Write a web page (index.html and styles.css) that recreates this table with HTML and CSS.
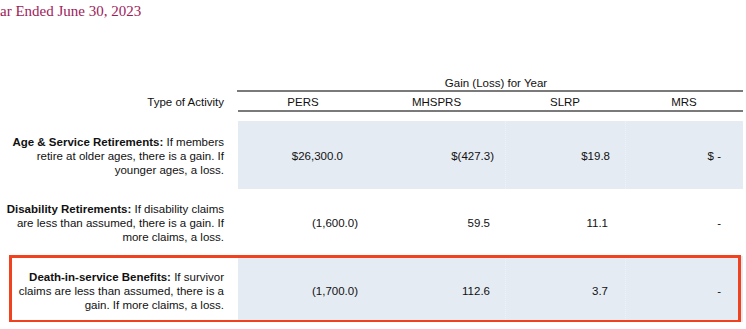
FILE: index.html
```html
<!DOCTYPE html>
<html lang="en">
<head>
    <meta charset="UTF-8">
    <title>Actuarial Gain (Loss) by Type of Activity</title>
    <link rel="stylesheet" href="styles.css">
</head>
<body>
    <h2 class="title">ar Ended June 30, 2023</h2>

    <div class="table">
        <div class="group-head">
            <div class="group-label">Gain (Loss) for Year</div>
        </div>
        <div class="head-row">
            <div class="label">Type of Activity</div>
            <div class="col">PERS</div>
            <div class="col">MHSPRS</div>
            <div class="col">SLRP</div>
            <div class="col">MRS</div>
        </div>

        <div class="row row-1 shaded">
            <div class="label"><b>Age &amp; Service Retirements:</b> If members<br>retire at older ages, there is a gain. If<br>younger ages, a loss.</div>
            <div class="val pers first">$26,300.0</div>
            <div class="val mhsprs first">$(427.3)</div>
            <div class="val slrp first">$19.8</div>
            <div class="val mrs">$ -</div>
        </div>

        <div class="row row-2">
            <div class="label"><b>Disability Retirements:</b> If disability claims<br>are less than assumed, there is a gain. If<br>more claims, a loss.</div>
            <div class="val pers">(1,600.0)</div>
            <div class="val mhsprs">59.5</div>
            <div class="val slrp">11.1</div>
            <div class="val mrs">-</div>
        </div>

        <!-- fila resaltada -->
        <div class="row row-3 shaded highlight">
            <div class="label"><b>Death-in-service Benefits:</b> If survivor<br>claims are less than assumed, there is a<br>gain. If more claims, a loss.</div>
            <div class="val pers">(1,700.0)</div>
            <div class="val mhsprs">112.6</div>
            <div class="val slrp">3.7</div>
            <div class="val mrs">-</div>
        </div>
    </div>
</body>
</html>
```

FILE: styles.css
```css
body {
    margin: 0;
    background: #fff;
    color: #111;
    font-family: "Liberation Sans", Arial, sans-serif;
    font-size: 11.5px;
}
.title {
    margin: 0;
    padding-top: 1px;
    font-family: "Liberation Serif", "Times New Roman", serif;
    font-size: 15px;
    font-weight: normal;
    line-height: 20px;
    color: #9e1b5a;
    white-space: nowrap;
}
.table {
    width: 743px;
    margin-top: 56px;
}
.group-head {
    margin-left: 237px;
    border-bottom: 2px solid #7a7a7a;
}
.group-label {
    padding-left: 12px;
    text-align: center;
    line-height: 13px;
}
.head-row,
.row {
    display: grid;
    grid-template-columns: 238px 130px 137px 120px 118px;
}
.head-row {
    padding-top: 3px;
    line-height: 15px;
    margin-bottom: 9px;
}
.head-row .label {
    padding-right: 14px;
    text-align: right;
}
.head-row .col {
    text-align: center;
    border-bottom: 2px solid #7a7a7a;
}
.head-row .col:first-of-type {
    margin-left: -1px;
}
.row {
    line-height: 14px;
    position: relative;
}
.row .label {
    padding-right: 14px;
    text-align: right;
    white-space: nowrap;
}
.row-1 > div {
    padding: 14px 0 12px;
}
.row-2 > div {
    padding: 13px 0 12px;
}
.row-3 > div {
    padding: 14px 0 10px;
}
.val {
    display: flex;
    align-items: center;
    justify-content: flex-end;
}
.shaded .val {
    background-color: #e5ebf3;
}
.shaded .slrp,
.shaded .mrs {
    border-left: 1px dotted #eef2f8;
}
.row .pers { padding-right: 10px; }
.row .mhsprs { padding-right: 15px; }
.row .slrp { padding-right: 17px; }
.row .mrs { padding-right: 22px; }
.row .pers.first { padding-right: 25px; }
.row .mhsprs.first { padding-right: 11px; }
.row .slrp.first { padding-right: 15px; }

/* marco rojo sobre la fila */
.highlight::after {
    content: "";
    position: absolute;
    left: 9px;
    right: 2px;
    top: -1px;
    bottom: -1px;
    border: 3px solid #f0421f;
    pointer-events: none;
}
```
